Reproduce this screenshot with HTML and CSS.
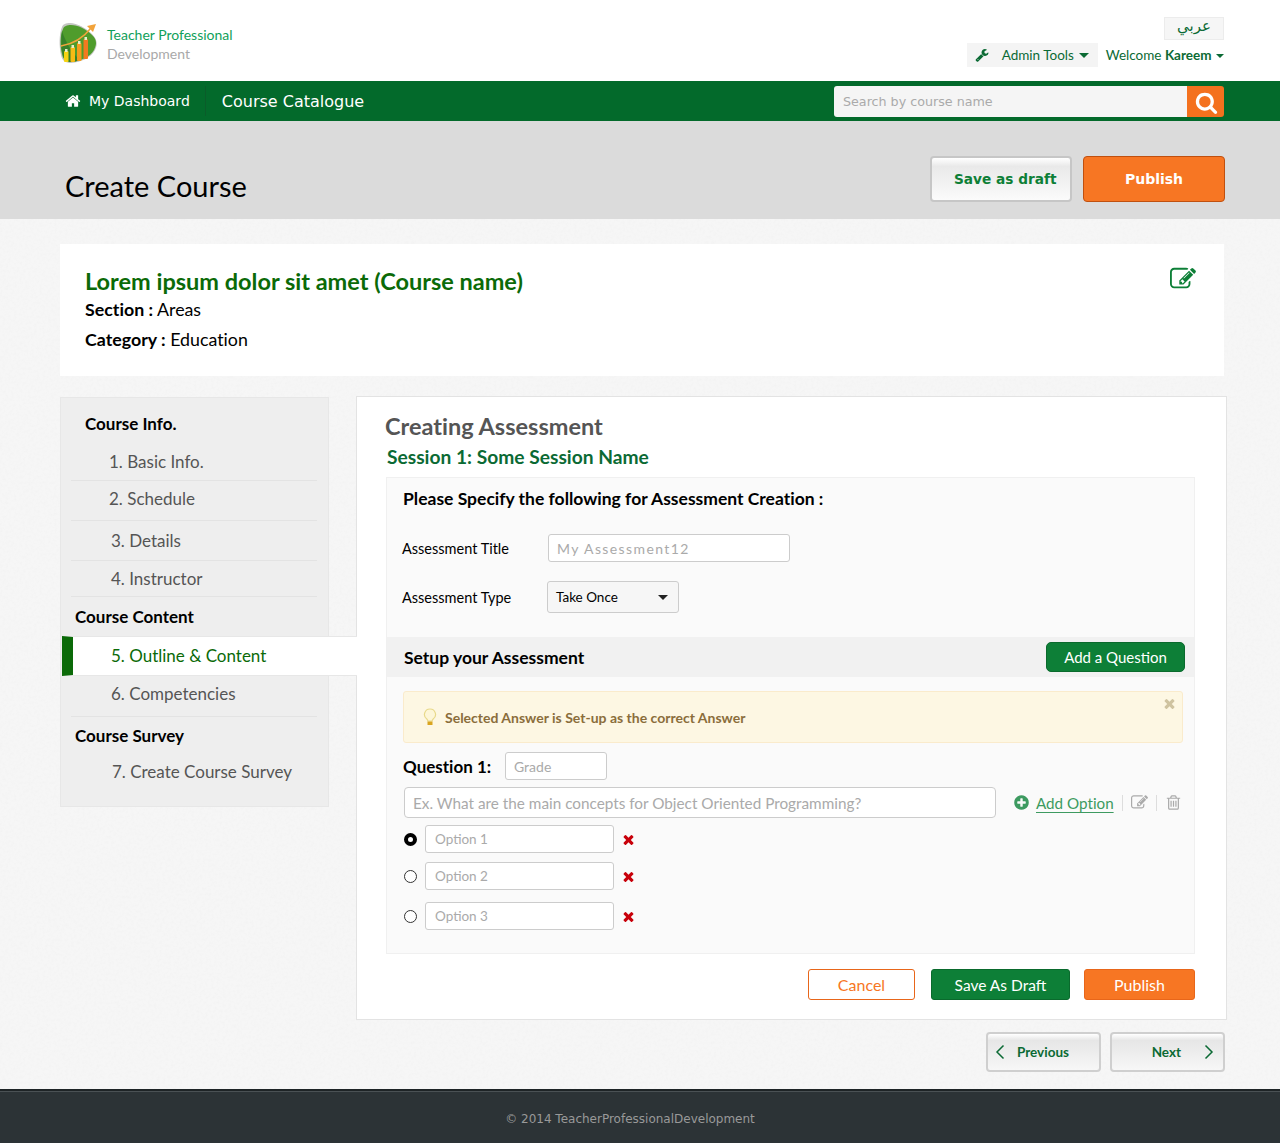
FILE: index.html
```html
<!DOCTYPE html>
<html lang="en">

<head>
    <meta charset="UTF-8">
    <meta name="viewport" content="width=device-width, initial-scale=1.0">
    <title>Create Course</title>
    <link rel="stylesheet" href="styles.css">
</head>

<body>
    <svg class="iconDefs" width="0" height="0">
        <symbol id="i-home" viewBox="0 0 1792 1792"><path d="M1472 992v480q0 26-19 45t-45 19h-384v-384h-256v384h-384q-26 0-45-19t-19-45v-480q0-1 .5-3t.5-3l575-474 575 474q1 2 1 6zm223-69l-62 74q-8 9-21 11h-3q-13 0-21-7l-692-577-692 577q-12 8-24 7-13-2-21-11l-62-74q-8-10-7-23.5t11-21.5l719-599q32-26 76-26t76 26l244 204v-195q0-14 9-23t23-9h192q14 0 23 9t9 23v408l219 182q10 8 11 21.5t-7 23.5z"/></symbol>
        <symbol id="i-wrench" viewBox="0 0 1792 1792"><path d="M448 1472q0-26-19-45t-45-19-45 19-19 45 19 45 45 19 45-19 19-45zm644-420l-682 682q-37 37-90 37-52 0-91-37l-106-108q-38-36-38-90 0-53 38-91l681-681q39 98 114.5 173.5t173.5 114.5zm634-435q0 39-23 106-47 134-164.5 217.5t-258.5 83.5q-185 0-316.5-131.5t-131.5-316.5 131.5-316.5 316.5-131.5q58 0 121.5 16.5t107.5 46.5q16 11 16 28t-16 28l-293 169v224l193 107q5-3 79-48.5t135.5-81 70.5-35.5q15 0 23.5 10t8.5 25z"/></symbol>
        <symbol id="i-search" viewBox="0 0 1792 1792"><path d="M1216 832q0-185-131.5-316.5t-316.5-131.5-316.5 131.5-131.5 316.5 131.5 316.5 316.5 131.5 316.5-131.5 131.5-316.5zm512 832q0 52-38 90t-90 38q-54 0-90-38l-343-342q-179 124-399 124-143 0-273.5-55.5t-225-150-150-225-55.5-273.5 55.5-273.5 150-225 225-150 273.5-55.5 273.5 55.5 225 150 150 225 55.5 273.5q0 220-124 399l343 343q37 37 37 90z"/></symbol>
        <symbol id="i-edit" viewBox="0 0 1792 1792"><path d="M888 1184l116-116-152-152-116 116v56h96v96h56zm440-720q-16-16-33 1l-350 350q-17 17-1 33t33-1l350-350q17-17 1-33zm80 594v190q0 119-84.5 203.5t-203.5 84.5h-832q-119 0-203.5-84.5t-84.5-203.5v-832q0-119 84.5-203.5t203.5-84.5h832q63 0 117 25 15 7 18 23 3 17-9 29l-49 49q-14 14-32 8-23-6-45-6h-832q-66 0-113 47t-47 113v832q0 66 47 113t113 47h832q66 0 113-47t47-113v-126q0-13 9-22l64-64q15-15 35-7t20 29zm-96-738l288 288-672 672h-288v-288zm444 132l-92 92-288-288 92-92q28-28 68-28t68 28l152 152q28 28 28 68t-28 68z"/></symbol>
        <symbol id="i-trash" viewBox="0 0 1792 1792"><path d="M704 736v576q0 14-9 23t-23 9h-64q-14 0-23-9t-9-23v-576q0-14 9-23t23-9h64q14 0 23 9t9 23zm256 0v576q0 14-9 23t-23 9h-64q-14 0-23-9t-9-23v-576q0-14 9-23t23-9h64q14 0 23 9t9 23zm256 0v576q0 14-9 23t-23 9h-64q-14 0-23-9t-9-23v-576q0-14 9-23t23-9h64q14 0 23 9t9 23zm128 724v-948h-896v948q0 22 7 40.5t14.5 27 10.5 8.5h832q3 0 10.5-8.5t14.5-27 7-40.5zm-672-1076h448l-48-117q-7-9-17-11h-317q-10 2-17 11zm928 32v64q0 14-9 23t-23 9h-96v948q0 83-47 143.5t-113 60.5h-832q-66 0-113-58.5t-47-141.5v-952h-96q-14 0-23-9t-9-23v-64q0-14 9-23t23-9h309l70-167q15-37 54-63t79-26h320q40 0 79 26t54 63l70 167h309q14 0 23 9t9 23z"/></symbol>
        <symbol id="i-plus" viewBox="0 0 1792 1792"><path d="M1344 960v-128q0-26-19-45t-45-19h-256v-256q0-26-19-45t-45-19h-128q-26 0-45 19t-19 45v256h-256q-26 0-45 19t-19 45v128q0 26 19 45t45 19h256v256q0 26 19 45t45 19h128q26 0 45-19t19-45v-256h256q26 0 45-19t19-45zm320-64q0 209-103 385.5t-279.5 279.5-385.5 103-385.5-103-279.5-279.5-103-385.5 103-385.5 279.5-279.5 385.5-103 385.5 103 279.5 279.5 103 385.5z"/></symbol>
        <symbol id="i-times" viewBox="0 0 1792 1792"><path d="M1490 1322q0 40-28 68l-136 136q-28 28-68 28t-68-28l-294-294-294 294q-28 28-68 28t-68-28l-136-136q-28-28-28-68t28-68l294-294-294-294q-28-28-28-68t28-68l136-136q28-28 68-28t68 28l294 294 294-294q28-28 68-28t68 28l136 136q28 28 28 68t-28 68l-294 294 294 294q28 28 28 68z"/></symbol>
    </svg>

    <header class="topBar">
        <div class="logo">
            <svg class="logoMark" viewBox="0 0 42 42" width="42" height="42">
                <path d="M12 1C8 1 5 2 4 5 1 12 1 24 3 33c1 6 5 8 10 8 10-1 20-5 24-13 3-6 2-11-3-16C28 6 19 1 12 1z" fill="#c4c6c2"/>
                <path d="M13 3C9 3 6 4 5 7 2 13 2 24 4 32c1 6 5 8 9 8 10-1 19-5 23-12 3-6 3-10-2-15C28 7 20 3 13 3z" fill="#4f9c2c"/>
                <path d="M4 9C3 16 3 26 5 33c1 5 4 7 8 7 3 0 6-1 9-2-8-7-14-17-18-29z" fill="#37802a"/>
                <path d="M3 24C15 22 26 15 33 6" fill="none" stroke="#f2a33a" stroke-width="1.500"/>
                <path d="M29 4l9-2-3 8z" fill="#f2a33a"/>
                <rect x="6" y="29" width="4.500" height="11" rx="1" fill="#f6d313"/>
                <rect x="7" y="27" width="2.500" height="3" fill="#e9efc8"/>
                <rect x="12.500" y="25" width="4.500" height="15" rx="1" fill="#f8bb14"/>
                <rect x="13.500" y="23" width="2.500" height="3" fill="#e9efc8"/>
                <rect x="19" y="21" width="4.500" height="18" rx="1" fill="#f59c1c"/>
                <rect x="20" y="19" width="2.500" height="3" fill="#e9efc8"/>
                <rect x="25.500" y="17" width="4.500" height="20" rx="1" fill="#f37a20"/>
                <rect x="26.500" y="15" width="2.500" height="3" fill="#e9efc8"/>
            </svg>
            <div class="logoText">
                <div class="logoTitle">Teacher Professional</div>
                <div class="logoSub">Development</div>
            </div>
        </div>
        <div class="topRight">
            <a class="langBtn" lang="ar">عربي</a>
            <div class="userRow">
                <div class="adminTools">
                    <svg class="icon wrench"><use href="#i-wrench"></use></svg>
                    <span>Admin Tools</span>
                    <span class="caret"></span>
                </div>
                <div class="welcome">Welcome <b>Kareem</b> <span class="caret small"></span></div>
            </div>
        </div>
    </header>

    <nav class="mainNav">
        <div class="navLinks">
            <a class="navDash"><svg class="icon"><use href="#i-home"></use></svg>My Dashboard</a>
            <a class="navCat">Course Catalogue</a>
        </div>
        <div class="searchBox">
            <input type="text" placeholder="Search by course name">
            <button class="searchBtn"><svg class="icon"><use href="#i-search"></use></svg></button>
        </div>
    </nav>

    <section class="titleBand">
        <h1>Create Course</h1>
        <div class="titleActions">
            <button class="bandBtn draft">Save as draft</button>
            <button class="bandBtn publish">Publish</button>
        </div>
    </section>

    <main class="page">
        <section class="courseCard">
            <div>
                <h2>Lorem ipsum dolor sit amet (Course name)</h2>
                <p><b>Section :</b> Areas</p>
                <p><b>Category :</b> Education</p>
            </div>
            <svg class="icon cardEdit"><use href="#i-edit"></use></svg>
        </section>

        <div class="columns">
            <aside class="sideNav">
                <div class="sideHead first">Course Info.</div>
                <a class="sideItem item1">1. Basic Info.</a>
                <a class="sideItem item2">2. Schedule</a>
                <a class="sideItem item3">3. Details</a>
                <a class="sideItem item4">4. Instructor</a>
                <div class="sideHead second">Course Content</div>
                <a class="sideItem active">5. Outline &amp; Content</a>
                <a class="sideItem item6">6. Competencies</a>
                <div class="sideHead third">Course Survey</div>
                <a class="sideItem item7">7. Create Course Survey</a>
            </aside>

            <section class="content">
                <h3 class="contentTitle">Creating Assessment</h3>
                <h4 class="sessionTitle">Session 1: Some Session Name</h4>

                <div class="assessPanel">
                    <div class="specifyTitle">Please Specify the following for Assessment Creation :</div>
                    <div class="fieldRow titleRow">
                        <label>Assessment Title</label>
                        <input class="textInput titleInput" type="text" placeholder="My Assessment12">
                    </div>
                    <div class="fieldRow typeRow">
                        <label>Assessment Type</label>
                        <div class="fakeSelect">Take Once <span class="caret dark"></span></div>
                    </div>

                    <div class="setupBar">
                        <span>Setup your Assessment</span>
                        <button class="btn green addQuestion">Add a Question</button>
                    </div>

                    <div class="alertBox">
                        <svg class="bulb" viewBox="0 0 14 18" width="14" height="18">
                            <path d="M7 1a5.5 5.5 0 0 0-3.2 10c.7.6 1 1.3 1 2h4.400c0-.7.3-1.400 1-2A5.500 5.500 0 0 0 7 1z" fill="#fdf6d8" stroke="#e8d98a" stroke-width="1.200"/>
                            <rect x="4.500" y="13.500" width="5" height="3.500" fill="#d9a520"/>
                        </svg>
                        <span>Selected Answer is Set-up as the correct Answer</span>
                        <svg class="icon alertClose"><use href="#i-times"></use></svg>
                    </div>

                    <div class="questionRow">
                        <b>Question 1:</b>
                        <input class="textInput gradeInput" type="text" placeholder="Grade">
                    </div>
                    <div class="questionText">
                        <input class="textInput bigInput" type="text" placeholder="Ex. What are the main concepts for Object Oriented Programming?">
                        <svg class="icon addIcon"><use href="#i-plus"></use></svg>
                        <a class="addOption">Add Option</a>
                        <span class="toolSep"></span>
                        <svg class="icon toolIcon"><use href="#i-edit"></use></svg>
                        <span class="toolSep"></span>
                        <svg class="icon toolIcon"><use href="#i-trash"></use></svg>
                    </div>

                    <div class="optionRow first">
                        <input class="radio" type="radio" name="answer" checked>
                        <input class="textInput optionInput" type="text" placeholder="Option 1">
                        <svg class="icon removeIcon"><use href="#i-times"></use></svg>
                    </div>
                    <div class="optionRow">
                        <input class="radio" type="radio" name="answer">
                        <input class="textInput optionInput" type="text" placeholder="Option 2">
                        <svg class="icon removeIcon"><use href="#i-times"></use></svg>
                    </div>
                    <div class="optionRow third">
                        <input class="radio" type="radio" name="answer">
                        <input class="textInput optionInput" type="text" placeholder="Option 3">
                        <svg class="icon removeIcon"><use href="#i-times"></use></svg>
                    </div>
                </div>

                <div class="formActions">
                    <button class="btn outline">Cancel</button>
                    <button class="btn green saveDraft">Save As Draft</button>
                    <button class="btn orange">Publish</button>
                </div>
            </section>
        </div>

        <div class="pager">
            <button class="pagerBtn">
                <svg viewBox="0 0 10 16" width="10" height="16"><path d="M8.500 1.500L2 8l6.500 6.500" fill="none" stroke="#0b6a34" stroke-width="1.500"/></svg>
                <span>Previous</span>
            </button>
            <button class="pagerBtn next">
                <span>Next</span>
                <svg viewBox="0 0 10 16" width="10" height="16"><path d="M1.500 1.500L8 8l-6.500 6.500" fill="none" stroke="#0b6a34" stroke-width="1.500"/></svg>
            </button>
        </div>
    </main>

    <footer class="pageFooter">© 2014 TeacherProfessionalDevelopment</footer>
</body>

</html>
```

FILE: styles.css
```css
* {
    box-sizing: border-box;
}

body {
    margin: 0;
    font-family: Lato, "Noto Sans", Arial, sans-serif;
    font-variant-ligatures: none;
    color: #000;
    background-color: #f6f6f6;
}

.iconDefs {
    display: block;
    height: 0;
}

.icon {
    display: block;
    fill: currentColor;
}

button {
    font-family: inherit;
    cursor: pointer;
}

/* header */
.topBar {
    height: 81px;
    background: #fff;
    display: flex;
    justify-content: space-between;
    padding: 17px 56px 0 58px;
}

.logo {
    display: flex;
    align-items: flex-start;
    padding-top: 5px;
}

.logoText {
    margin-left: 7px;
    padding-top: 3px;
    font-size: 14px;
    line-height: 19px;
}

.logoTitle {
    color: #11a05a;
}

.logoSub {
    color: #a9a9a9;
}

.topRight {
    display: flex;
    flex-direction: column;
    align-items: flex-end;
}

.langBtn {
    width: 60px;
    height: 23px;
    line-height: 16px;
    border: 1px solid #ececec;
    background: #f6f6f6;
    color: #0b6a34;
    font-family: "DejaVu Sans", sans-serif;
    font-size: 15px;
    text-align: center;
}

.userRow {
    display: flex;
    align-items: center;
    margin-top: 3px;
    color: #0b6a34;
    font-size: 13.500px;
}

.adminTools {
    width: 131px;
    height: 24px;
    background: #f4f4f4;
    display: flex;
    align-items: center;
    padding-left: 8px;
}

.wrench {
    width: 14px;
    height: 14px;
    margin-right: 13px;
}

.caret {
    display: inline-block;
    margin-left: 5px;
    border-top: 5px solid #0b6a34;
    border-left: 5px solid transparent;
    border-right: 5px solid transparent;
}

.caret.small {
    margin-left: 1px;
    vertical-align: 2px;
    border-top-width: 4px;
    border-left-width: 4px;
    border-right-width: 4px;
}

.caret.dark {
    border-top-color: #222;
    margin-left: 0;
}

.welcome {
    margin-left: 8px;
}

/* green nav */
.mainNav {
    height: 40px;
    background: #036a2b;
    display: flex;
    justify-content: space-between;
    padding: 5px 56px 0 65px;
    font-family: "DejaVu Sans", sans-serif;
    color: #fff;
}

.navLinks {
    display: flex;
    align-items: center;
    height: 30px;
}

.navDash {
    display: flex;
    align-items: center;
    height: 30px;
    font-size: 14px;
    padding: 0 15px 1px 0;
    border-right: 1px solid #0a5c2a;
}

.navDash .icon {
    width: 16px;
    height: 16px;
    margin-right: 8px;
}

.navCat {
    font-size: 16px;
    margin-left: 16px;
}

.searchBox {
    display: flex;
    width: 390px;
    height: 31px;
}

.searchBox input {
    flex: 1;
    border: 0;
    background: #f5f5f5;
    border-radius: 3px 0 0 3px;
    padding: 0 9px;
    font-family: "DejaVu Sans", sans-serif;
    font-size: 12.700px;
}

.searchBox input::placeholder {
    color: #aaa;
}

.searchBtn {
    width: 37px;
    border: 0;
    padding: 2px 0 0 8px;
    background: #f4711e;
    border-radius: 0 3px 3px 0;
    color: #fff;
}

.searchBtn .icon {
    width: 23px;
    height: 23px;
}

/* title band */
.titleBand {
    height: 98px;
    background: #dbdbdb;
    display: flex;
    justify-content: space-between;
    padding: 35px 55px 0 65px;
}

.titleBand h1 {
    margin: 0;
    font-size: 29px;
    font-weight: 400;
    line-height: 60px;
}

.titleActions {
    display: flex;
    gap: 11px;
}

.bandBtn {
    width: 142px;
    height: 46px;
    border-radius: 4px;
    font-family: "DejaVu Sans", sans-serif;
    font-size: 14px;
    font-weight: 700;
    white-space: nowrap;
}

.bandBtn.draft {
    padding: 0 0 0 22px;
    text-align: left;
    font-size: 13.700px;
    color: #0d7f37;
    border: 2px solid #c6c6c6;
    background: linear-gradient(#fff, #e9e9e9 20%, #fbfbfb);
}

.bandBtn.publish {
    color: #fff;
    background: #f77623;
    border: 1px solid #c0500f;
}

/* page */
.page {
    padding: 25px 53px 17px 60px;
    height: 870px;
    background-color: #f6f6f6;
    background-image: url("data:image/svg+xml,%3Csvg xmlns='http://www.w3.org/2000/svg' width='300' height='300'%3E%3Cfilter id='n'%3E%3CfeTurbulence type='fractalNoise' baseFrequency='.35' numOctaves='3' stitchTiles='stitch'/%3E%3CfeColorMatrix values='0 0 0 0 .5 0 0 0 0 .5 0 0 0 0 .5 .5 0 0 0 -.2'/%3E%3C/filter%3E%3Crect width='300' height='300' filter='url(%23n)' opacity='.18'/%3E%3C/svg%3E");
}

.courseCard {
    width: 1164px;
    height: 132px;
    background: #fff;
    display: flex;
    justify-content: space-between;
    padding: 20px 28px 0 25px;
}

.courseCard h2 {
    margin: 0 0 -4px;
    font-size: 23.500px;
    font-weight: 700;
    line-height: 34px;
    color: #0b6a08;
}

.courseCard p {
    margin: 0;
    font-size: 17.800px;
    line-height: 30px;
}

.courseCard b {
    font-weight: 700;
}

.cardEdit {
    width: 26px;
    height: 26px;
    color: #0d7f37;
    margin-top: 2px;
}

.columns {
    display: flex;
    align-items: flex-start;
    margin-top: 20px;
}

/* sidebar */
.sideNav {
    width: 269px;
    height: 410px;
    margin-top: 1px;
    margin-right: 27px;
    background: #eee;
    border: 1px solid #e7e7e7;
    font-size: 17px;
    display: flex;
    flex-direction: column;
}

.sideHead {
    font-weight: 700;
    display: flex;
    align-items: center;
    padding-left: 14px;
}

.sideHead.first {
    height: 38px;
    margin-top: 6px;
    padding-left: 24px;
}

.sideHead.second {
    height: 39px;
}

.sideHead.third {
    height: 36px;
}

.sideItem {
    display: flex;
    align-items: center;
    margin: 0 11px 0 10px;
    padding-left: 38px;
    color: #555;
    border-bottom: 1px solid #e3e3e3;
}

.item1 {
    height: 39px;
}

.item2 {
    height: 40px;
    padding-bottom: 4px;
}

.item3 {
    height: 40px;
    padding-left: 40px;
}

.item4 {
    height: 36px;
    padding-left: 40px;
}

.item6 {
    height: 41px;
    padding-left: 40px;
    padding-bottom: 6px;
}

.item7 {
    height: 36px;
    padding-left: 41px;
    border-bottom: 0;
}

.sideItem.active {
    position: relative;
    z-index: 1;
    height: 40px;
    margin: 0 -29px 0 1px;
    padding: 0 0 1px 38px;
    color: #0b6a08;
    background: #fff;
    border-left: 11px solid #0b6a08;
    border-top: 1px solid #e7e7e7;
    border-bottom: 1px solid #e7e7e7;
}

/* main column */
.content {
    width: 871px;
    height: 624px;
    background: #fff;
    border: 1px solid #e3e3e3;
    padding: 12px 31px 0 29px;
}

.contentTitle {
    margin: 0 0 0 -1px;
    font-size: 23.500px;
    font-weight: 700;
    line-height: 34px;
    color: #555;
}

.sessionTitle {
    margin: 1px 0 7px 1px;
    font-size: 19.200px;
    font-weight: 700;
    line-height: 26px;
    color: #0b6a34;
}

.assessPanel {
    height: 477px;
    background: #fafafa;
    border: 1px solid #f0f0f0;
}

.specifyTitle {
    padding: 8px 0 0 16px;
    font-size: 17.500px;
    font-weight: 700;
    line-height: 26px;
}

.fieldRow {
    display: flex;
    align-items: center;
    font-size: 14.500px;
    padding-left: 15px;
}

.fieldRow label {
    width: 146px;
}

.titleRow {
    margin-top: 22px;
}

.typeRow {
    margin-top: 19px;
}

.typeRow label {
    width: 145px;
}

.textInput {
    display: block;
    height: 28px;
    border: 1px solid #ccc;
    border-radius: 3px;
    background: #fff;
    font-family: inherit;
    font-size: 14px;
    padding: 0 8px;
}

.textInput::placeholder {
    color: #aaa;
}

.titleInput {
    width: 242px;
    letter-spacing: 1.400px;
}

.fakeSelect {
    width: 132px;
    height: 32px;
    border: 1px solid #ccc;
    border-radius: 3px;
    background: #f6f6f6;
    font-size: 13.500px;
    display: flex;
    align-items: center;
    justify-content: space-between;
    padding: 0 10px 0 8px;
}

.setupBar {
    height: 40px;
    margin-top: 24px;
    background: #f1f1f1;
    display: flex;
    align-items: center;
    justify-content: space-between;
    padding: 0 9px 0 17px;
    font-size: 17.500px;
    font-weight: 700;
}

.btn {
    height: 31px;
    border-radius: 3px;
    font-size: 16px;
    font-weight: 400;
    padding: 0;
}

.btn.green {
    color: #fff;
    background: #0d7f37;
    border: 1px solid #0a6a2d;
}

.btn.orange {
    width: 111px;
    color: #fff;
    background: #f77623;
    border: 1px solid #e8661a;
}

.btn.outline {
    width: 107px;
    margin-right: 2px;
    color: #f77623;
    background: #fff;
    border: 1px solid #e8661a;
}

.addQuestion {
    width: 139px;
    height: 30px;
    border-radius: 5px;
    font-size: 15px;
}

.saveDraft {
    width: 139px;
    font-size: 15.500px;
}

.alertBox {
    position: relative;
    height: 52px;
    margin: 14px 11px 0 16px;
    background: #fdf7e3;
    border: 1px solid #faebcc;
    border-radius: 3px;
    display: flex;
    align-items: center;
    padding-left: 19px;
    font-size: 14px;
    font-weight: 700;
    color: #8a6d3b;
}

.bulb {
    margin-right: 8px;
}

.alertClose {
    position: absolute;
    top: 4px;
    right: 5px;
    width: 15px;
    height: 15px;
    color: #cfc3a0;
}

.questionRow {
    display: flex;
    align-items: center;
    margin: 9px 0 0 16px;
    font-size: 17px;
}

.questionRow b {
    width: 102px;
    font-weight: 700;
}

.gradeInput {
    width: 102px;
}

.questionText {
    display: flex;
    align-items: center;
    margin: 7px 0 0 17px;
}

.bigInput {
    width: 592px;
    height: 31px;
    border-radius: 4px;
    font-size: 15.300px;
}

.addIcon {
    width: 17px;
    height: 17px;
    margin-left: 17px;
    color: #3d9a60;
}

.addOption {
    margin-left: 6px;
    font-size: 15.200px;
    color: #3d9a60;
    text-decoration: underline;
    text-underline-offset: 3px;
}

.toolSep {
    width: 1px;
    height: 16px;
    margin: 0 8px;
    background: #ddd;
}

.toolIcon {
    width: 17px;
    height: 17px;
    color: #aaa;
}

.optionRow {
    display: flex;
    align-items: center;
    height: 28px;
    margin: 9px 0 0 17px;
}

.optionRow.first {
    margin-top: 7px;
}

.optionRow.third {
    margin-top: 12px;
}

.radio {
    appearance: none;
    width: 13px;
    height: 13px;
    margin: 0 8px 0 0;
    background: #fff;
    border: 1px solid #333;
    border-radius: 50%;
}

.radio:checked {
    border: 4px solid #000;
}

.optionInput {
    width: 189px;
    padding: 0 9px;
    font-size: 13.500px;
}

.removeIcon {
    width: 15px;
    height: 15px;
    margin-left: 7px;
    color: #c8000a;
}

.formActions {
    display: flex;
    justify-content: flex-end;
    margin-top: 15px;
    gap: 14px;
}

/* prev / next */
.pager {
    display: flex;
    justify-content: flex-end;
    gap: 9px;
    margin: 12px 2px 0 0;
}

.pagerBtn {
    width: 115px;
    height: 40px;
    display: flex;
    align-items: center;
    padding: 0 9px 0 7px;
    gap: 12px;
    border: 2px solid #cfcfcf;
    border-radius: 4px;
    background: linear-gradient(#fff, #e6e6e6 18%, #f7f7f7);
    color: #0b6a34;
    font-size: 13.500px;
    font-weight: 700;
}

.pagerBtn.next {
    justify-content: flex-end;
    gap: 23px;
}

/* footer */
.pageFooter {
    height: 54px;
    padding-right: 20px;
    background: #2c3336;
    border-top: 2px solid #1e2426;
    box-shadow: inset 0 1px 0 #4a5154;
    color: #999;
    font-family: "DejaVu Sans", sans-serif;
    font-size: 12px;
    text-align: center;
    line-height: 56px;
}
```
